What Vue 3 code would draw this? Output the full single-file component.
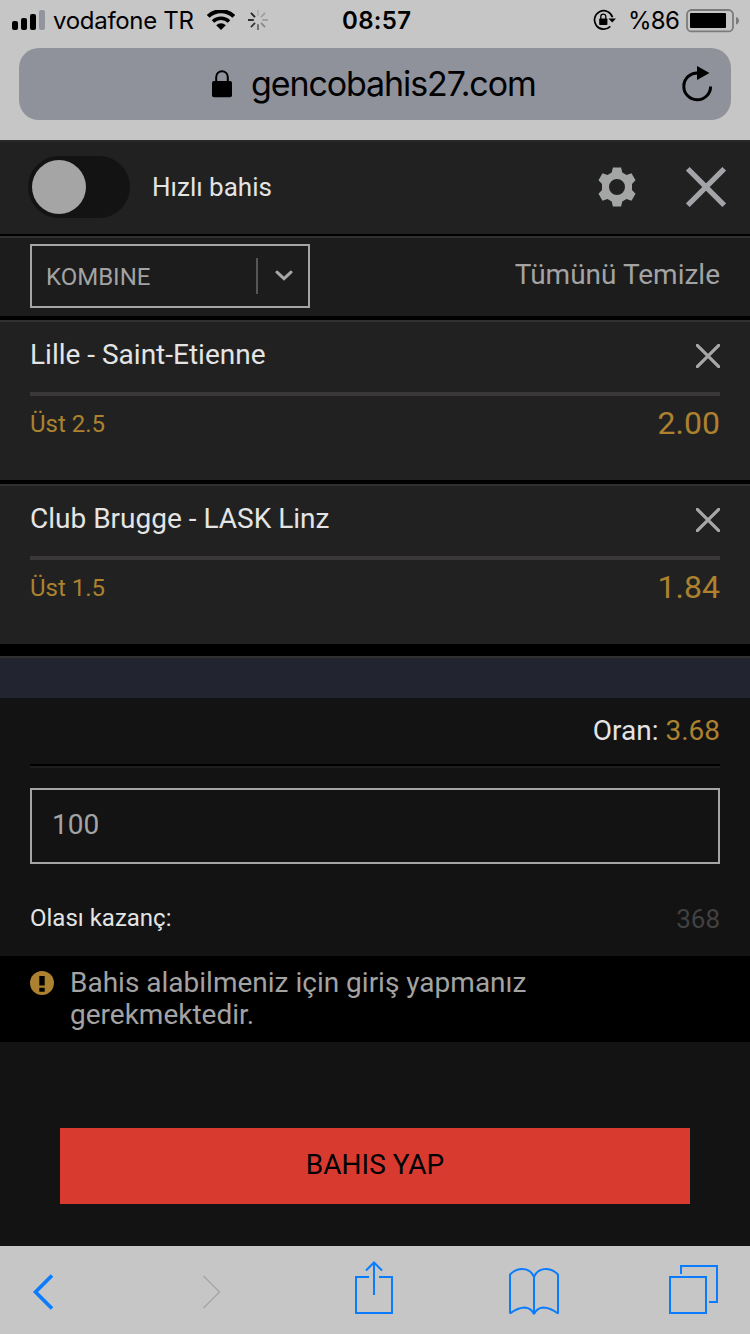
<script setup>
const bets = [
  { match: 'Lille - Saint-Etienne', pick: 'Üst 2.5', odd: '2.00' },
  { match: 'Club Brugge - LASK Linz', pick: 'Üst 1.5', odd: '1.84' },
]
const spokes = [
  [0, 0.12], [45, 0.2], [90, 0.22], [135, 0.32], [180, 0.5], [225, 0.75], [270, 0.9], [315, 0.85],
]
</script>

<template>
  <div class="phone">
    <header class="browser">
      <div class="status">
        <svg class="signal" width="34" height="20" viewBox="0 0 34 20">
          <rect x="0" y="11" width="6" height="9" rx="2" />
          <rect x="9" y="8" width="6" height="12" rx="2" />
          <rect x="18" y="4" width="6" height="16" rx="2" />
          <rect x="27" y="0" width="6" height="20" rx="2" fill="#92959e" />
        </svg>
        <span class="carrier">vodafone TR</span>
        <svg class="wifi" width="28" height="20" viewBox="0 0 28 20">
          <path d="M1.2 6.4a18.4 18.4 0 0 1 25.6 0" fill="none" stroke="#000" stroke-width="4" />
          <path d="M6 11.5a11.6 11.6 0 0 1 16 0" fill="none" stroke="#000" stroke-width="3.5" />
          <path d="M9.2 15.2a7 7 0 0 1 9.6 0L14 20z" />
        </svg>
        <svg class="spinner" width="20" height="20" viewBox="-10 -10 20 20">
          <path
            v-for="[angle, alpha] in spokes"
            :key="angle"
            d="M0-10V-4.2"
            stroke="#000"
            stroke-width="1.7"
            :stroke-opacity="alpha"
            :transform="`rotate(${angle})`"
          />
        </svg>
        <span class="clock">08:57</span>
        <svg class="rotation" width="24" height="22" viewBox="0 0 24 22">
          <path d="M19.5 8.2A9.2 9.2 0 1 0 17.3 17.4" fill="none" stroke="#000" stroke-width="1.7" />
          <path d="M15.4 9.6h7.6l-3.8 4z" />
          <rect x="6.2" y="9.5" width="8.2" height="6.5" rx=".8" />
          <path d="M7.8 10V7.6a2.5 2.5 0 0 1 5 0V10" fill="none" stroke="#000" stroke-width="1.3" />
        </svg>
        <span class="percent">%86</span>
        <svg class="battery" width="54" height="24" viewBox="0 0 54 24">
          <rect x="1" y="1" width="46" height="21.4" rx="4.5" fill="none" stroke="#7b7b7b" stroke-width="1.8" />
          <rect x="4" y="4" width="36" height="15" rx="1" />
          <path d="M50 8v7.6q3-1 3-3.8T50 8z" fill="#7b7b7b" />
        </svg>
      </div>
      <div class="address">
        <svg class="lock" width="20" height="28" viewBox="0 0 20 28">
          <rect x="0" y="11" width="20" height="16.3" rx="2" />
          <path d="M4.2 12V7a5.8 5.8 0 0 1 11.6 0v5" fill="none" stroke="#000" stroke-width="2" />
        </svg>
        <span class="host">gencobahis27.com</span>
        <svg class="reload" width="32" height="36" viewBox="0 0 32 36">
          <path d="M16 7A13.4 13.4 0 1 0 28.6 20.4" fill="none" stroke="#000" stroke-width="3" />
          <path d="M15 0v14l12.5-7z" />
        </svg>
      </div>
    </header>

    <section class="quick">
      <div class="toggle"><i></i></div>
      <span class="quick-label">Hızlı bahis</span>
      <svg class="gear" width="38" height="40" viewBox="0 0 38 40">
        <path fill="#a4a5a5" fill-rule="evenodd" d="M14.9 .5h8.2l1.2 5 4.2 2.6 5-1.8 4 7-3.5 3.8v5.8l3.5 3.8-4 7-5-1.8-4.2 2.6-1.2 5h-8.2l-1.2-5-4.2-2.6-5 1.8-4-7L4 22.9V17.1L.5 13.3l4-7 5 1.8 4.2-2.6zM19 12a8 8 0 1 0 0 16 8 8 0 0 0 0-16z" />
      </svg>
      <svg class="close" width="40" height="40" viewBox="0 0 40 40">
        <path d="M1.8 1.8 38.2 38.2M38.2 1.8 1.8 38.2" stroke="#a3a4a7" stroke-width="5.2" />
      </svg>
    </section>

    <section class="kind">
      <div class="select">
        <span>KOMBINE</span>
        <div class="arrow">
          <svg width="18" height="12" viewBox="0 0 18 12">
            <path d="M2 2.2 9 8.7 16 2.2" fill="none" stroke="#a6a6a8" stroke-width="3" stroke-linecap="round" />
          </svg>
        </div>
      </div>
      <span class="clear">Tümünü Temizle</span>
    </section>

    <section v-for="bet in bets" :key="bet.match" class="bet">
      <div class="match">
        <span>{{ bet.match }}</span>
        <svg width="24" height="24" viewBox="0 0 24 24">
          <path d="M1.3 1.3 22.7 22.7M22.7 1.3 1.3 22.7" stroke="#a7a7a7" stroke-width="3.2" stroke-linecap="round" />
        </svg>
      </div>
      <div class="odds">
        <span>{{ bet.pick }}</span>
        <b>{{ bet.odd }}</b>
      </div>
    </section>

    <div class="band"></div>

    <section class="slip">
      <div class="total">Oran:&nbsp;<b>3.68</b></div>
      <div class="stake">100</div>
      <div class="win"><span>Olası kazanç:</span><b>368</b></div>
    </section>

    <div class="notice">
      <svg width="24" height="24" viewBox="0 0 24 24">
        <circle cx="12" cy="12" r="12" fill="#ac812f" />
        <path d="M9.3 5h5.4v9.5H9.3zM9.3 16.7h5.4v4H9.3z" fill="#000" />
      </svg>
      <p>Bahis alabilmeniz için giriş yapmanız<br />gerekmektedir.</p>
    </div>

    <div class="action"><div class="submit">BAHIS YAP</div></div>

    <footer class="tools">
      <svg width="750" height="88" viewBox="0 0 750 88" fill="none" stroke="#0a7cfd" stroke-width="2">
        <path d="M52 29.5 35.5 46 52 62.5" stroke-width="3.6" />
        <path d="M203.5 30 219.5 46 203.5 62" stroke="#a5a5a5" stroke-width="1.3" />
        <path d="M369 31H356V67H392V31H379M374 49V17M366 24.5 374 16.5 382 24.5" />
        <path stroke-linejoin="bevel" d="M510 67.5V28.5Q516 22.5 523 23Q531 23.500 534 31Q537 23.500 545 23Q552 22.500 558 28.500V67.500Q550 61.500 543 61.500Q537 62 534 68Q531 62 525 61.500Q518 61.500 510 67.500M534 31V68" />
        <path d="M670 31H706V67H670zM681 28V20H717V56H709" />
      </svg>
    </footer>
  </div>
</template>

<style>
body { margin: 0; background: #131313; }
</style>

<style scoped>
* { box-sizing: border-box; }
.phone { width: 750px; height: 1334px; display: flex; flex-direction: column; overflow: hidden; background: #131313; color: #e4e4e4; font-family: Roboto, "Noto Sans", sans-serif; font-size: 28px; }
.phone > * { flex: none; }
svg { display: block; flex: none; }
b { font-weight: 400; color: #ac812f; }
span { white-space: nowrap; }

.browser { height: 140px; background: #c6c6c6; color: #000; font-family: Inter, "Liberation Sans", sans-serif; }
.status { height: 48px; display: grid; grid-template-columns: 12px 41px 153px 41px 96px 251px 34px 58px 64px; align-items: start; line-height: 30px; }
.signal { grid-column: 2; margin-top: 10px; }
.carrier { margin-top: 6px; font-size: 24px; letter-spacing: -0.3px; }
.wifi { margin: 10px 0 0 1px; }
.spinner { margin: 10px 0 0 1px; }
.clock { margin: 6px 0 0 -1px; font-size: 24px; font-weight: 600; letter-spacing: 0.3px; }
.rotation { margin: 9px 0 0 -1px; }
.percent { margin-top: 6px; font-size: 24px; letter-spacing: -0.7px; }
.battery { margin-top: 9px; }
.address { height: 72px; margin: 0 19px; padding: 0 17px 0 193px; display: flex; align-items: center; border-radius: 20px; background: #8f929b; }
.lock { margin-top: -1px; }
.host { margin-left: 19px; font-size: 34px; line-height: 44px; letter-spacing: -1.1px; }
.reload { margin: 0 0 0 auto; }

.quick { height: 96px; display: flex; align-items: center; padding: 0 24px 2px 28px; background: #212121; border-top: 2px solid #292929; border-bottom: 2px solid #000; }
.toggle { width: 102px; height: 62px; padding: 4px; border-radius: 31px; background: #131313; }
.toggle i { display: block; width: 54px; height: 54px; border-radius: 50%; background: #a4a5a4; }
.quick-label { margin-left: 22px; font-size: 26px; }
.gear { margin-left: auto; }
.close { margin-left: 50px; }

.kind { height: 84px; display: flex; justify-content: space-between; padding: 6px 30px; background: #1c1c1c; border-top: 2px solid #303030; border-bottom: 4px solid #000; color: #a3a3a3; }
.select { width: 280px; height: 64px; display: flex; align-items: center; justify-content: space-between; padding-left: 14px; border: 2px solid #a4a5a5; font-size: 24px; }
.select span { padding-top: 2px; }
.arrow { width: 52px; height: 36px; display: flex; align-items: center; padding-left: 17px; border-left: 2px solid #575555; }
.clear { line-height: 62px; }

.bet { height: 164px; padding: 0 30px; background: #212121; border-top: 2px solid #303030; border-bottom: 4px solid #000; }
.match { height: 74px; display: flex; align-items: center; justify-content: space-between; padding-bottom: 2px; border-bottom: 4px solid #3a3838; line-height: 64px; }
.match span { margin-top: -2px; }
.odds { display: flex; justify-content: space-between; line-height: 56px; color: #ac812f; font-size: 24px; }
.odds b { font-size: 32px; line-height: 54px; }

.band { height: 54px; border-top: 12px solid #000; margin-top: -4px; background: linear-gradient(#303030 2px, #222530 2px); }
.slip { height: 258px; padding: 0 30px; }
.total { height: 70px; display: flex; justify-content: flex-end; line-height: 66px; border-bottom: 2px solid #1e1e1e; box-shadow: inset 0 -2px #000; }
.stake { height: 76px; margin-top: 20px; padding-left: 20px; border: 2px solid #a4a5a5; color: #a4a4a4; line-height: 69px; }
.win { display: flex; justify-content: space-between; padding-top: 24px; line-height: 60px; font-size: 24px; }
.win b { font-size: 26px; line-height: 62px; color: #414141; }

.notice { height: 86px; display: flex; padding: 11px 30px; gap: 16px; background: #000; color: #a3a3a3; }
.notice svg { margin-top: 4px; }
.notice p { margin: 0; line-height: 32px; }
.action { height: 204px; padding: 86px 60px 0; }
.submit { height: 76px; background: #d93a30; color: #000; text-align: center; line-height: 73px; }
.tools { height: 88px; background: #c6c6c6; }
</style>
